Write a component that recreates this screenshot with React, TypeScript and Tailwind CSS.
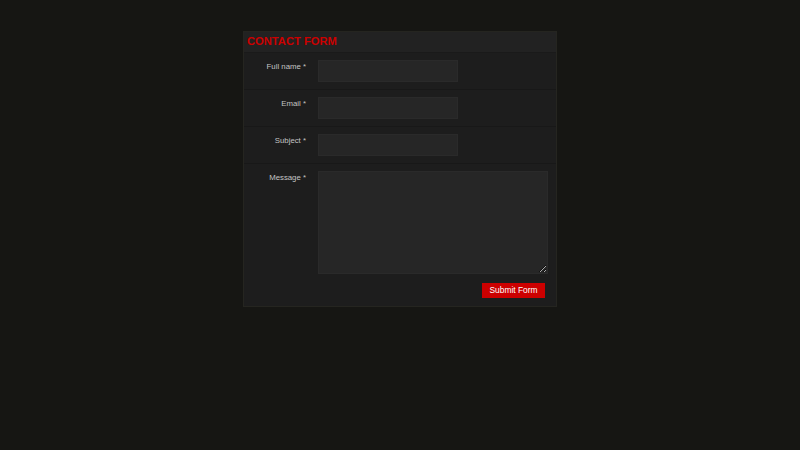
import { FC } from 'react'

const fields = [
  { id: 'name', label: 'Full name *' },
  { id: 'email', label: 'Email *' },
  { id: 'subject', label: 'Subject *' },
]

const ContactForm: FC = () => {
  return (
    <div className="border border-[#252520] bg-[#1d1d1d] w-[314px]">
      <div className="h-[21px] bg-[#222222] border-b border-[#1a1a1a] flex items-center px-[3px]">
        <h2 className="text-[11.2px] font-bold text-[#cc0000] leading-none">CONTACT FORM</h2>
      </div>

      {fields.map((f) => (
        <div key={f.id} className="flex border-b border-[#181818] pt-[7px] pb-[7px]">
          <label htmlFor={f.id} className="w-[62px] text-right text-[7.8px] text-[#c4c4c4] pt-[2px] leading-[9px]">
            {f.label}
          </label>
          <input
            id={f.id}
            type="text"
            className="ml-[12px] w-[140px] h-[22px] bg-[#262626] border border-[#2a2a2a] outline-none text-[8px] text-[#ccc] px-1"
          />
        </div>
      ))}

      <div className="flex pt-[7px]">
        <label htmlFor="message" className="w-[62px] text-right text-[7.8px] text-[#c4c4c4] pt-[2px] leading-[9px]">
          Message *
        </label>
        <textarea
          id="message"
          className="ml-[12px] w-[230px] h-[103px] bg-[#262626] border border-[#2a2a2a] outline-none text-[8px] text-[#ccc] p-1"
        />
      </div>

      <div className="flex justify-end pt-[9px] pb-[8px] pr-[11px]">
        <button className="h-[15px] w-[63px] bg-[#cc0000] text-white text-[8.4px] leading-none">
          Submit Form
        </button>
      </div>
    </div>
  )
}

export default function App() {
  return (
    <div className="min-h-screen bg-[#161613] flex items-start justify-center pt-[31px] font-['Liberation_Sans',Arial,sans-serif]">
      <ContactForm />
    </div>
  )
}
